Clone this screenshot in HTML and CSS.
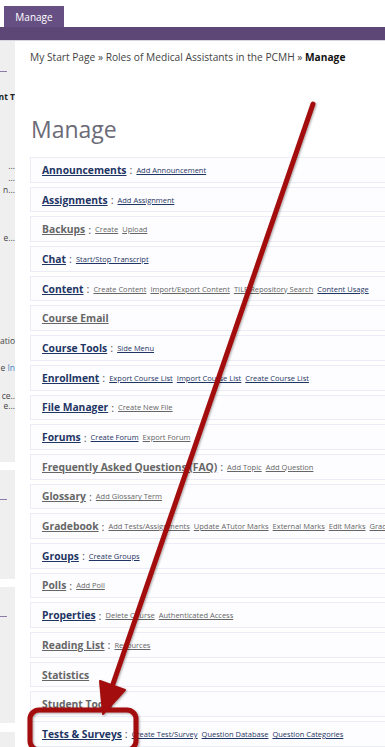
FILE: index.html
```html
<!DOCTYPE html>
<html lang="en">
<head>
  <meta charset="UTF-8">
  <meta name="viewport" content="width=device-width, initial-scale=1.0">
  <title>Manage</title>
  <link rel="stylesheet" href="styles.css">
</head>
<body>
  <div class="topbar">
    <div class="tabs">
      <span class="tab">Manage</span>
    </div>
    <div class="subbar"></div>
  </div>

  <div class="layout">
    <aside class="side">
      <div class="panel p1">
        <span class="rule"></span>
        <div class="frag bold f1">nt T</div>
        <div class="frag f2">...</div>
        <div class="frag f3">...</div>
        <div class="frag f3">n...</div>
        <div class="frag f4">e...</div>
        <div class="frag f5">atio</div>
        <div class="frag f6">e&nbsp;<span class="in">In</span></div>
        <div class="frag f7">ce..</div>
        <div class="frag f8">e...</div>
      </div>
      <div class="panel p2"><span class="rule"></span></div>
      <div class="panel p3"><span class="rule"></span></div>
      <div class="panel p4"></div>
    </aside>

    <main class="main">
      <div class="crumbs">
        <a href="#">My Start Page</a> &raquo; <a href="#">Roles of Medical Assistants in the PCMH</a> &raquo; <strong>Manage</strong>
      </div>
      <h1>Manage</h1>

      <ul class="tools">
        <li><a class="t on" href="#">Announcements</a> : <a class="s on" href="#">Add Announcement</a></li>
        <li><a class="t on" href="#">Assignments</a> : <a class="s on" href="#">Add Assignment</a></li>
        <li><a class="t" href="#">Backups</a> : <a class="s" href="#">Create</a> <a class="s" href="#">Upload</a></li>
        <li><a class="t on" href="#">Chat</a> : <a class="s on" href="#">Start/Stop Transcript</a></li>
        <li><a class="t on" href="#">Content</a> : <a class="s" href="#">Create Content</a> <a class="s" href="#">Import/Export Content</a> <a class="s" href="#">TILE Repository Search</a> <a class="s on" href="#">Content Usage</a></li>
        <li><a class="t" href="#">Course Email</a></li>
        <li><a class="t on" href="#">Course Tools</a> : <a class="s on" href="#">Side Menu</a></li>
        <li><a class="t on" href="#">Enrollment</a> : <a class="s on" href="#">Export Course List</a> <a class="s on" href="#">Import Course List</a> <a class="s on" href="#">Create Course List</a></li>
        <li><a class="t on" href="#">File Manager</a> : <a class="s" href="#">Create New File</a></li>
        <li><a class="t on" href="#">Forums</a> : <a class="s on" href="#">Create Forum</a> <a class="s" href="#">Export Forum</a></li>
        <li><a class="t" href="#">Frequently Asked Questions (FAQ)</a> : <a class="s" href="#">Add Topic</a> <a class="s" href="#">Add Question</a></li>
        <li><a class="t" href="#">Glossary</a> : <a class="s" href="#">Add Glossary Term</a></li>
        <li><a class="t" href="#">Gradebook</a> : <a class="s" href="#">Add Tests/Assignments</a> <a class="s" href="#">Update ATutor Marks</a> <a class="s" href="#">External Marks</a> <a class="s" href="#">Edit Marks</a> <a class="s" href="#">Grade Scales</a></li>
        <li><a class="t on" href="#">Groups</a> : <a class="s on" href="#">Create Groups</a></li>
        <li><a class="t" href="#">Polls</a> : <a class="s" href="#">Add Poll</a></li>
        <li><a class="t on" href="#">Properties</a> : <a class="s" href="#">Delete Course</a> <a class="s" href="#">Authenticated Access</a></li>
        <li><a class="t" href="#">Reading List</a> : <a class="s" href="#">Resources</a></li>
        <li><a class="t" href="#">Statistics</a></li>
        <li><span class="t plain">Student Tools</span></li>
        <li><a class="t on" href="#">Tests &amp; Surveys</a> : <a class="s on" href="#">Create Test/Survey</a> <a class="s on" href="#">Question Database</a> <a class="s on" href="#">Question Categories</a></li>
      </ul>
    </main>
  </div>

  <!-- red annotation drawn over the screenshot -->
  <svg class="callout" width="385" height="747" viewBox="0 0 385 747">
    <defs>
      <filter id="shade" x="-20%" y="-20%" width="140%" height="140%">
        <feDropShadow dx="1" dy="1" stdDeviation="1" flood-color="#000" flood-opacity="0.35"/>
      </filter>
    </defs>
    <g filter="url(#shade)" fill="none" stroke="#a30a0a" stroke-linecap="round" stroke-linejoin="round">
      <line x1="313" y1="104" x2="113" y2="684" stroke-width="5"/>
      <polygon points="103,714 100,681 125,690" fill="#a30a0a" stroke-width="2"/>
      <rect x="30" y="710" width="106" height="40" rx="9" stroke-width="5"/>
    </g>
  </svg>
</body>
</html>
```

FILE: styles.css
```css
* {
  box-sizing: border-box;
}
body {
  margin: 0;
  width: 385px;
  height: 747px;
  overflow: hidden;
  position: relative;
  background: #fff;
  font-family: 'Open Sans', 'Noto Sans', sans-serif;
  color: #333;
}
a {
  color: inherit;
}

/* top navigation */
.topbar {
  width: 100%;
}
.tabs {
  height: 27px;
  padding: 6px 0 0 4px;
  display: flex;
}
.tab {
  background: #665083;
  color: #fff;
  font-size: 10px;
  width: 60px;
  height: 21px;
  display: flex;
  align-items: center;
  justify-content: center;
}
.subbar {
  height: 14px;
  background: #5d4777;
  border-bottom: 1px solid #d8d4e0;
}

.layout {
  display: flex;
  gap: 15px;
}

/* left column, mostly scrolled out of view */
.side {
  width: 15px;
  flex: none;
  display: flex;
  flex-direction: column;
}
.panel {
  background: #efefef;
  overflow: hidden;
  position: relative;
}
.p1 {
  height: 421px;
  padding-top: 30px;
}
.p2 {
  height: 109px;
  margin-top: 8px;
  padding-top: 29px;
}
.p3 {
  height: 136px;
  margin-top: 8px;
  padding-top: 29px;
}
.p4 {
  height: 40px;
  margin-top: 9px;
}
.rule {
  display: block;
  width: 7px;
  height: 1px;
  background: #8a7ca6;
}
.frag {
  display: flex;
  justify-content: flex-end;
  white-space: nowrap;
  font-size: 8.5px;
  line-height: 12px;
  color: #444;
}
.frag.bold {
  font-weight: bold;
  color: #222;
}
.f1 { margin-top: 19px; }
.f2 { margin-top: 57px; }
.f3 { margin-top: 0; }
.f4 { margin-top: 36px; }
.f5 { margin-top: 91px; }
.f6 { margin-top: 15px; }
.f7 { margin-top: 16px; }
.f8 { margin-top: -2px; }
.in {
  color: #4a86c5;
}

/* main area */
.main {
  width: 600px;
  flex: none;
}
.crumbs {
  margin-top: 8px;
  font-size: 10.2px;
  line-height: 16px;
  color: #444;
  white-space: nowrap;
}
.crumbs a {
  text-decoration: none;
}
.crumbs strong {
  color: #111;
}
h1 {
  margin: 49px 0 0 1px;
  font-size: 23px;
  font-weight: normal;
  line-height: 30px;
  color: #6b6b78;
}
.tools {
  list-style: none;
  margin: 13px 0 0;
  padding: 0;
}
.tools li {
  height: 25.7px;
  margin-bottom: 4px;
  border: 1px solid #ececf6;
  background: #fdfdff;
  padding-left: 11px;
  display: flex;
  align-items: center;
  gap: 3px;
  white-space: nowrap;
  font-size: 11px;
  color: #555;
}
.t {
  font-size: 10.3px;
  font-weight: bold;
  color: #666;
}
.t.on {
  color: #1f3563;
}
.t.plain {
  text-decoration: none;
}
.s {
  font-size: 7.5px;
  color: #666;
  margin-left: 1px;
}
.s.on {
  color: #1f3563;
}

.callout {
  position: absolute;
  top: 0;
  left: 0;
  pointer-events: none;
}
```
